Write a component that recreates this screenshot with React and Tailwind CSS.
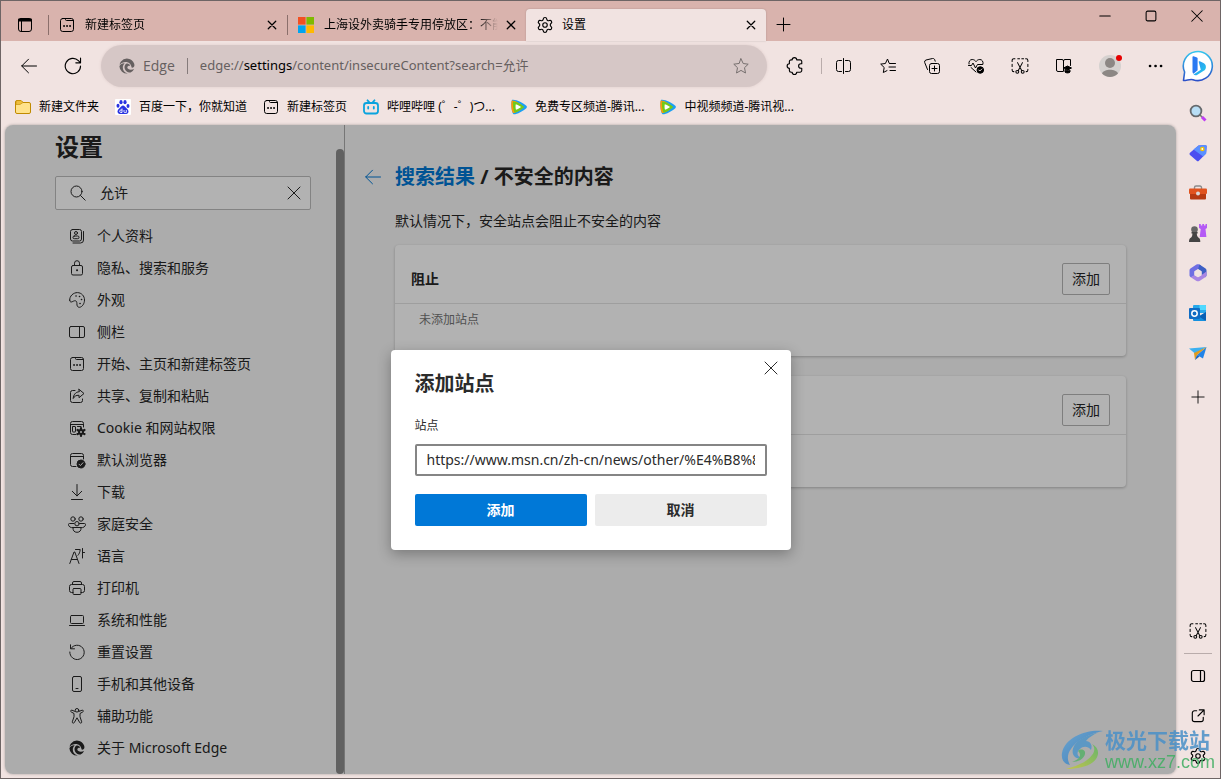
import React, { useState } from 'react'
import { Settings } from 'lucide-react'

const Icon = ({ children, className = 'h-4 w-4', width = 1 }) => (
  <svg
    viewBox="0 0 16 16"
    className={`shrink-0 ${className}`}
    fill="none"
    stroke="currentColor"
    strokeWidth={width}
    strokeLinecap="round"
    strokeLinejoin="round"
    aria-hidden="true"
  >
    {children}
  </svg>
)

const GearIcon = () => <Settings className="h-[18px] w-[18px] shrink-0" strokeWidth={1.5} aria-hidden="true" />

const CloseIcon = ({ className, width }) => (
  <Icon className={className} width={width}>
    <path d="M2 2l12 12M14 2L2 14" />
  </Icon>
)

const BackIcon = () => (
  <Icon>
    <path d="M15.5 8H.8M7.5 1.2L.7 8l6.8 6.8" />
  </Icon>
)

const NewTabIcon = () => (
  <Icon>
    <rect x="1.5" y="1.5" width="13" height="13" rx="2.2" />
    <path d="M6.5 1.5v1a1 1 0 0 0 1 1h7" />
    <path d="M5 9h.1M8 9h.1M11 9h.1" strokeWidth="1.8" />
  </Icon>
)

const EdgeIcon = () => (
  <svg viewBox="0 0 16 16" className="h-4 w-4 shrink-0" fill="currentColor" aria-hidden="true">
    <path d="M2 3.6A7.6 7.6 0 0 1 15.1 5.4C16.2 8.6 14.4 10 12.6 9.6 12.2 6 9.6 3.9 6.6 4 4.4 4.100 2.200 5 .6 6.800.7 5.500 1.200 4.500 2 3.600z" />
    <path d="M.4 8.200C1.500 6.200 3.600 5.200 5.500 5.400 3.500 7.400 3.300 10.600 4.700 12.800 5.600 14.200 7 15.100 8.800 15.500A7.600 7.600 0 0 1 .4 8.200z" />
    <path d="M7.200 5.700C9 5.200 10.800 6.200 11.200 7.900 9.800 7.600 8.300 8.200 8.300 9.600 8.600 11.700 12 12.500 15.100 11A7.400 7.400 0 0 1 11.600 14.600C8.200 14.700 5.600 12.300 5.500 9.300 5.500 7.600 6.200 6.300 7.200 5.700z" />
  </svg>
)

const SnipIcon = () => (
  <Icon className="h-[18px] w-[18px]" width={0.9}>
    <path d="M1 4V3a1.500 1.500 0 0 1 1.500-1.500h1M6 1.500h1.600M9.600 1.500h1.600M13 1.500h.5A1.500 1.500 0 0 1 15 3v1M1 6.500v2M15 6.500v2M1 10.800v.7A1.500 1.500 0 0 0 2.500 13M15 10.800v.7a1.500 1.500 0 0 1-1.500 1.500" />
    <path d="M5.800 5l3.700 7M10.200 5l-3.700 7" />
    <circle cx="5.600" cy="13.200" r="1.300" />
    <circle cx="10.400" cy="13.200" r="1.300" />
  </Icon>
)

const TencentIcon = () => (
  <svg viewBox="0 0 16 16" className="h-4 w-4 shrink-0" aria-hidden="true">
    <path d="M1.200.8C5 .2 12.500 4 15.300 6.800c.8.8.8 1.600 0 2.400C12.500 12 5 15.800 2.600 15.300.6 14.500-.4 3 1.200.8z" fill="#1ba0f2" />
    <path d="M.8 1.600C3.400 1 9.500 4.500 12 8c-2.500 3.500-7 6-10 6C.1 11.500-.2 4 .8 1.600z" fill="#ff9a0b" />
    <path d="M2 2.500c3 .1 8.600 3 11.200 5.500C10.600 10.600 6 13.400 3.400 13.600 2.200 10.600 1.500 5.500 2 2.500z" fill="#72ca1a" />
    <path d="M4.800 5.200C6.600 5.600 9 7 10 8c-1 1-3.200 2.400-5 2.800-.5-1.400-.6-4-.2-5.600z" fill="#fff" />
  </svg>
)

const NAV = [
  {
    label: '个人资料',
    icon: (
      <>
        <rect x="1.5" y="1.5" width="11" height="11.5" rx="2" />
        <path d="M14.500 3.500V12a3 3 0 0 1-3 3H4" />
        <circle cx="7" cy="5" r="1.5" />
        <rect x="4" y="8" width="6" height="2.700" rx="1.300" />
      </>
    ),
  },
  {
    label: '隐私、搜索和服务',
    icon: (
      <>
        <rect x="2.5" y="5.5" width="11" height="9.5" rx="1.5" />
        <path d="M5.500 5.500V3.200a2.500 2.500 0 0 1 5 0v2.300" />
        <path d="M8 10.200h.1" strokeWidth="2" />
      </>
    ),
  },
  {
    label: '外观',
    icon: (
      <>
        <path d="M.7 8.200C.3 4 4.500.5 8.500.6c4 .1 7 3.400 7 7.400 0 3.500-2.200 7-5 7.300-1.500.1-2.300-1-2.500-2.300-.2-1.800.1-3.500-1.200-4.100C5 8.200 3.500 10 2.200 10 1.200 10 .8 9.200.7 8.200z" />
        <path d="M7 4h.1M10.500 4.500h.1M12.500 7.500h.1M11 11.500h.1" strokeWidth="1.6" />
      </>
    ),
  },
  {
    label: '侧栏',
    icon: (
      <>
        <rect x=".5" y="2.5" width="15" height="11" rx="1.5" />
        <path d="M10.500 2.500v11" />
      </>
    ),
  },
  {
    label: '开始、主页和新建标签页',
    icon: (
      <>
        <rect x="1.5" y="1.5" width="13" height="13" rx="2" />
        <path d="M6.500 1.500v1a1 1 0 0 0 1 1h7" />
        <path d="M5 9h.1M8 9h.1M11 9h.1" strokeWidth="1.8" />
      </>
    ),
  },
  {
    label: '共享、复制和粘贴',
    icon: (
      <>
        <path d="M6 2.500H3.500a2 2 0 0 0-2 2v8a2 2 0 0 0 2 2h8a2 2 0 0 0 2-2V11" />
        <path d="M10 1.300l5 4.200-5 4.200V7.300C7 7 5.300 8.500 4.200 10.500 4.500 7 6.300 4 10 3.700z" />
      </>
    ),
  },
  {
    label: 'Cookie 和网站权限',
    icon: (
      <>
        <path d="M7 14.500H3.500a2 2 0 0 1-2-2v-9a2 2 0 0 1 2-2h9a2 2 0 0 1 2 2V7M1.500 4.500h13" />
        <rect x="3.5" y="6.5" width="3" height="5.5" rx=".5" />
        <path d="M8.500 6.500H12" />
        <path
          d="M12 8v8M8.500 10l7 4M8.500 14l7-4"
          strokeWidth="2.200"
        />
        <circle cx="12" cy="12" r="3" fill="currentColor" stroke="none" />
        <circle cx="12" cy="12" r="1" fill="#f7f7f7" stroke="none" />
      </>
    ),
  },
  {
    label: '默认浏览器',
    icon: (
      <>
        <path d="M7 14.500H3.500a2 2 0 0 1-2-2v-9a2 2 0 0 1 2-2h9a2 2 0 0 1 2 2V7M1.500 4.500h13" />
        <circle cx="12" cy="12" r="4" fill="currentColor" />
        <path d="M10 12.200l1.400 1.400 2.600-2.900" stroke="#f7f7f7" />
      </>
    ),
  },
  { label: '下载', icon: <path d="M8 .5v11.300M3.300 7.300L8 12l4.700-4.700M2.500 15.500h11" /> },
  {
    label: '家庭安全',
    icon: (
      <>
        <circle cx="4" cy="3" r="2.200" />
        <circle cx="12" cy="3" r="2.200" />
        <circle cx="8" cy="7.700" r="2.200" />
        <path d="M5 7.500H.5a1 1 0 0 0-1 1c0 2 2 3.500 4.500 3.200M11 7.500h4.500a1 1 0 0 1 1 1c0 2-2 3.500-4.500 3.200" />
        <path d="M4 11.500h8c.3 3-1.200 4.800-4 4.800s-4.300-1.800-4-4.800z" />
      </>
    ),
  },
  {
    label: '语言',
    icon: <path d="M.8 15.500L5 4h.8L10 15.500M2.300 11.500h6.200M6.500 1.500h4.700C11 4 10.200 6 9 7.300M13.500.5v9.500M13.500 4.500h2" />,
  },
  {
    label: '打印机',
    icon: (
      <>
        <path d="M4 12.500H2.500a2 2 0 0 1-2-2v-4a2 2 0 0 1 2-2h11a2 2 0 0 1 2 2v4a2 2 0 0 1-2 2H12" />
        <path d="M3.500 4.500V3a1.500 1.500 0 0 1 1.500-1.500h6A1.500 1.500 0 0 1 12.500 3v1.500" />
        <rect x="4" y="8.500" width="8" height="6" rx="1" />
      </>
    ),
  },
  {
    label: '系统和性能',
    icon: (
      <>
        <rect x="1.5" y="3.5" width="13" height="8" rx="1" />
        <path d="M.5 13.500h15" />
      </>
    ),
  },
  { label: '重置设置', icon: <path d="M1.500.8v4h4M1.900 4.500A7.200 7.200 0 1 1 .8 8" /> },
  {
    label: '手机和其他设备',
    icon: (
      <>
        <rect x="3.5" y=".5" width="9" height="15" rx="1.5" />
        <path d="M7 12.500h2" />
      </>
    ),
  },
  {
    label: '辅助功能',
    icon: (
      <>
        <circle cx="8" cy="2.300" r="1.800" />
        <path d="M6.200 3.500L2.900 2.200c-1.300-.3-1.800 1.300-.6 1.800L5 5.500v3.300l-1.700 5c-.3 1.400 1.500 1.900 2 .7L8 9.800l2.700 4.700c.5 1.200 2.300.7 2-.7l-1.700-5V5.500L13.700 4c1.200-.5.7-2.100-.6-1.800L9.800 3.500" />
      </>
    ),
  },
]

const Tab = ({ icon, title }) => (
  <div className="flex h-8 w-[239px] items-center">
    <span className="h-5 w-px bg-[#8b6f6b]" />
    <span className="ml-2.5">{icon}</span>
    <span className="mr-2 ml-2.5 flex-1 overflow-hidden whitespace-nowrap [mask-image:linear-gradient(to_right,black_88%,transparent)]">
      {title}
    </span>
    <button type="button" aria-label="关闭标签页" className="mr-2.5">
      <CloseIcon className="h-2.5 w-2.5" width={2} />
    </button>
  </div>
)

const TabStrip = () => (
  <header className="flex h-10 items-end bg-[#d9b3ad] text-xs text-black">
    <button type="button" aria-label="标签页菜单" className="flex h-8 w-[47px] items-center justify-center">
      <Icon>
        <rect x="1.5" y="1.5" width="13" height="13" rx="2.5" />
        <path d="M2 3.500h12M2 2.500h12" strokeWidth="2" />
        <path d="M4.500 4v10.500" />
      </Icon>
    </button>
    <Tab icon={<NewTabIcon />} title="新建标签页" />
    <Tab
      icon={
        <svg viewBox="0 0 16 16" className="h-4 w-4 shrink-0" aria-hidden="true">
          <path fill="#f25022" d="M0 0h7.600v7.600H0z" />
          <path fill="#7fba00" d="M8.400 0H16v7.600H8.400z" />
          <path fill="#00a4ef" d="M0 8.400h7.600V16H0z" />
          <path fill="#ffb900" d="M8.400 8.400H16V16H8.400z" />
        </svg>
      }
      title="上海设外卖骑手专用停放区：不能"
    />
    <div className="flex h-8 w-60 items-center rounded-t bg-[#f1e3e1] px-2.5 shadow-[0_0_2px_rgba(0,0,0,0.2)]">
      <GearIcon />
      <span className="ml-2 flex-1">设置</span>
      <button type="button" aria-label="关闭标签页">
        <CloseIcon className="h-2.5 w-2.5" width={2} />
      </button>
    </div>
    <button type="button" aria-label="新建标签页" className="flex h-8 w-9 items-center justify-center">
      <Icon>
        <path d="M7.500 1v13M1 7.500h13" />
      </Icon>
    </button>
    <div className="ml-auto flex h-full items-start">
      <button type="button" aria-label="最小化" className="flex h-[30px] w-[46px] items-center justify-center">
        <Icon className="h-3 w-3" width={1.4}>
          <path d="M1 8h14" />
        </Icon>
      </button>
      <button type="button" aria-label="最大化" className="flex h-[30px] w-[46px] items-center justify-center">
        <Icon className="h-3 w-3" width={1.4}>
          <rect x="1.5" y="1.5" width="13" height="13" rx="2" />
        </Icon>
      </button>
      <button type="button" aria-label="关闭" className="flex h-[30px] w-[46px] items-center justify-center">
        <Icon className="h-3 w-3" width={1.4}>
          <path d="M1 1l14 14M15 1L1 15" />
        </Icon>
      </button>
    </div>
  </header>
)

const ToolButton = ({ label, children, className = 'w-11' }) => (
  <button type="button" aria-label={label} className={`flex h-10 shrink-0 items-center justify-center ${className}`}>
    {children}
  </button>
)

const Toolbar = () => {
  const [url, setUrl] = useState('edge://settings/content/insecureContent?search=允许')
  const [editing, setEditing] = useState(false)
  const [, scheme, host, path] = url.match(/^(\w+:\/\/)?([^/]*)(.*)$/)

  return (
    <div className="flex h-[50px] items-center pl-1.5 text-black">
      <ToolButton label="返回">
        <BackIcon />
      </ToolButton>
      <ToolButton label="刷新">
        <Icon className="h-[18px] w-[18px]">
          <path d="M14.700 8A6.800 6.800 0 1 1 12.800 3.300l1.700 1.700M14.700 1v4.200h-4.200" />
        </Icon>
      </ToolButton>
      <div className="ml-1.5 flex h-[42px] min-w-0 flex-1 items-center rounded-full bg-[#d6c7c6] px-[18px] text-[#666060] shadow-[0_0_3px_rgba(120,80,80,0.15)]">
        <EdgeIcon />
        <span className="ml-2 font-['Open_Sans',sans-serif] text-sm">Edge</span>
        <span className="mx-3 h-4 w-px bg-[#857b7b]" />
        <div className="relative min-w-0 flex-1 text-[13px]">
          <input
            id="address"
            aria-label="地址栏"
            className={`w-full bg-transparent outline-none ${editing ? 'text-black' : 'text-transparent'}`}
            value={url}
            onChange={(e) => setUrl(e.target.value)}
            onFocus={() => setEditing(true)}
            onBlur={() => setEditing(false)}
          />
          {!editing && (
            <label htmlFor="address" className="absolute inset-0 cursor-text truncate">
              {scheme}
              <span className="text-black">{host}</span>
              {path}
            </label>
          )}
        </div>
        <button type="button" aria-label="收藏此页" className="text-[#77706f]">
          <Icon>
            <path d="M8 .8l2.200 4.700 5 .7-3.700 3.500 1 5.300L8 12.400 3.500 15l1-5.300L.8 6.200l5-.7z" />
          </Icon>
        </button>
      </div>
      <ToolButton label="扩展" className="ml-1.5 w-11">
        <Icon className="h-[18px] w-[18px]">
          <path d="M5.500 2.500a2 2 0 0 1 4 0h3A1.500 1.500 0 0 1 14 4v2h-.8a2 2 0 0 0 0 4h.8v2a1.500 1.500 0 0 1-1.500 1.500h-3a2 2 0 0 1-4 0h-1A1.500 1.500 0 0 1 3 12v-2a2 2 0 0 1 0-4V4a1.500 1.500 0 0 1 1.500-1.500z" />
        </Icon>
      </ToolButton>
      <span className="ml-1 h-4 w-px bg-[#b9acab]" />
      <ToolButton label="分屏">
        <Icon>
          <path d="M5.500 2.500h-3a2 2 0 0 0-2 2v7a2 2 0 0 0 2 2h3M9.500 2.500h3a2 2 0 0 1 2 2v7a2 2 0 0 1-2 2h-3M7.500.5v15" />
        </Icon>
      </ToolButton>
      <ToolButton label="收藏夹">
        <Icon>
          <path d="M9 4.800L7.500 1 5.400 5.500l-4.700.6 3.500 3.400-.9 5L7 12.600M9.500 5.500h6M9 9h6.500M10 12.500h5.500" />
        </Icon>
      </ToolButton>
      <ToolButton label="集锦">
        <Icon>
          <rect x="5.5" y="5.5" width="10" height="10" rx="2" />
          <path d="M10.500 8v5M8 10.500h5M3.500 11.500l-2.800-7A2 2 0 0 1 2 2L8.500.5c1-.2 1.800.2 2.200 1.200l.5 1.500" />
        </Icon>
      </ToolButton>
      <ToolButton label="浏览器概要">
        <Icon>
          <path d="M8 14L3 9.500M1 6C.5 3.500 2 1.500 4.200 1.500 6 1.500 7.200 2.500 8 3.600 8.800 2.500 10 1.500 11.800 1.500 14 1.500 15.500 3.500 15 6M.5 7.500h3l1.500-2.500 2.500 5 2-3.500h5" />
          <circle cx="12.300" cy="12" r="3.300" fill="currentColor" />
          <path d="M10.800 12l1 1 2-2" stroke="#f1e3e1" />
        </Icon>
      </ToolButton>
      <ToolButton label="网页捕获">
        <SnipIcon />
      </ToolButton>
      <ToolButton label="沉浸式阅读器">
        <Icon>
          <path d="M7.500 2.500v10.500M7 13.500H2A1.500 1.500 0 0 1 .5 12V1.500H6A1.500 1.500 0 0 1 7.500 3 1.500 1.500 0 0 1 9 1.500h5.500v6" />
          <path d="M7.500 10l4-2 4 2-4 2zM9 12.500v1.500c1 1.200 4 1.200 5 0v-1.500z" fill="currentColor" />
        </Icon>
      </ToolButton>
      <ToolButton label="个人资料" className="w-12">
        <svg viewBox="0 0 24 24" className="h-6 w-6 overflow-visible" aria-hidden="true">
          <circle cx="12" cy="12" r="11" fill="#d5d1cf" />
          <circle cx="12" cy="9" r="5" fill="#8c8784" />
          <path d="M4 19.500c2-5 14-5 16 0a11 11 0 0 1-16 0z" fill="#8c8784" />
          <circle cx="21" cy="4" r="3" fill="#e60000" />
        </svg>
      </ToolButton>
      <ToolButton label="设置及其他" className="w-[42px]">
        <Icon>
          <path d="M3 8h.1M8.500 8h.1M14 8h.1" strokeWidth="2.6" />
        </Icon>
      </ToolButton>
    </div>
  )
}

const BOOKMARKS = [
  {
    title: '新建文件夹',
    icon: (
      <svg viewBox="0 0 16 16" className="h-4 w-4 shrink-0" aria-hidden="true">
        <path d="M.5 3A1.500 1.500 0 0 1 2 1.500h4l2 2h6A1.500 1.500 0 0 1 15.500 5v8a1.500 1.500 0 0 1-1.500 1.500H2A1.500 1.500 0 0 1 .5 13z" fill="#ffe28a" stroke="#c08a00" />
        <path d="M1 5.500h4l3-2-2-2H2L1 3z" fill="#eebd3c" stroke="#c08a00" strokeWidth=".6" />
      </svg>
    ),
  },
  {
    title: '百度一下，你就知道',
    icon: (
      <svg viewBox="0 0 16 16" className="h-4 w-4 shrink-0" fill="#2932e1" aria-hidden="true">
        <rect width="16" height="16" rx="1" fill="#fff" />
        <ellipse cx="6" cy="3.200" rx="1.600" ry="2.100" />
        <ellipse cx="10" cy="3.200" rx="1.600" ry="2.100" />
        <ellipse cx="3" cy="6.700" rx="1.500" ry="2" />
        <ellipse cx="13" cy="6.900" rx="1.500" ry="2" />
        <path d="M8 6.500c1.500 0 2.200 1.500 3.500 2.700 1.700 1.500 2.400 2.800 1.800 4.300-.8 2-3 1.500-5.300 1.500s-4.500.5-5.300-1.500c-.6-1.500.1-2.800 1.800-4.300C5.800 8 6.500 6.500 8 6.500z" />
        <path d="M7 9.500v4H5.800c-1.500 0-1.500-2.500 0-2.500H7M9 11v1.800c0 .7.500.9 2.300.7V11" fill="none" stroke="#fff" strokeWidth=".9" />
      </svg>
    ),
  },
  { title: '新建标签页', icon: <NewTabIcon /> },
  {
    title: '哔哩哔哩 (゜-゜)つ...',
    icon: (
      <svg viewBox="0 0 16 16" className="h-4 w-4 shrink-0" fill="none" stroke="#0aa3de" strokeWidth="1.8" strokeLinecap="round" aria-hidden="true">
        <rect x="1" y="4" width="14" height="10.5" rx="2.5" />
        <path d="M4.500 1.300L6.500 3.500M11.500 1.300l-2 2.200M5.200 8v1.500M10.800 8v1.500" />
      </svg>
    ),
  },
  { title: '免费专区频道-腾讯...', icon: <TencentIcon /> },
  { title: '中视频频道-腾讯视...', icon: <TencentIcon /> },
]

const BookmarkBar = () => (
  <nav className="mb-0.5 flex h-8 items-center gap-4 pl-3.5 text-xs text-black">
    {BOOKMARKS.map((item, index) => (
      <a key={index} href="#" className="flex items-center gap-2 whitespace-nowrap">
        {item.icon}
        {item.title}
      </a>
    ))}
  </nav>
)

const SettingsNav = () => {
  const [query, setQuery] = useState('允许')

  return (
    <aside className="flex w-[340px] shrink-0 border-r border-[#aaa] pt-1.5 pl-[50px]">
      <div className="flex-1 pb-2.5">
        <h1 className="mb-[13px] text-2xl font-bold">设置</h1>
        <div className="flex h-[34px] w-64 items-center rounded-xs border border-[#bcbcbc] bg-white pr-2 pl-3.5">
          <Icon>
            <circle cx="6.5" cy="6.5" r="5.5" />
            <path d="M10.500 10.500l4.700 4.700" />
          </Icon>
          <input
            aria-label="搜索设置"
            className="mr-2 ml-3.5 min-w-0 flex-1 bg-transparent text-sm outline-none"
            value={query}
            onChange={(e) => setQuery(e.target.value)}
          />
          <button type="button" aria-label="清除搜索" onClick={() => setQuery('')}>
            <CloseIcon />
          </button>
        </div>
        <ul className="mt-2.5 text-sm">
          {NAV.map((item) => (
            <li key={item.label}>
              <a href="#" className="flex h-8 items-center gap-3 pl-3.5">
                <Icon className="h-4 w-4 overflow-visible">{item.icon}</Icon>
                {item.label}
              </a>
            </li>
          ))}
          <li>
            <a href="#" className="flex h-8 items-center gap-3 pl-3.5">
              <EdgeIcon />
              关于 Microsoft Edge
            </a>
          </li>
        </ul>
      </div>
      <div className="mt-[18px] w-2 rounded-full bg-[#8c8c8c]" />
    </aside>
  )
}

const SiteCard = ({ title, empty }) => (
  <section className="mb-5 rounded bg-white shadow-[0_1px_3px_rgba(0,0,0,0.25)]">
    <div className="flex h-[59px] items-center justify-between border-b border-[#e2e2e2] px-4 pt-2.5">
      <h3 className="text-sm font-bold">{title}</h3>
      <button type="button" className="h-8 rounded-xs border border-[#b5b5b5] px-[9px] text-sm">
        添加
      </button>
    </div>
    <p className="h-[52px] px-6 pt-2 text-xs text-[#757575]">{empty}</p>
  </section>
)

const AddSiteDialog = ({ onClose }) => {
  const [site, setSite] = useState('https://www.msn.cn/zh-cn/news/other/%E4%B8%8A%E6%B5%B7')

  return (
    <div className="absolute inset-0 flex items-center justify-center bg-black/30">
      <form
        role="dialog"
        aria-labelledby="dialog-title"
        className="relative w-[400px] rounded bg-white px-6 pt-5 pb-6 text-[#2b2b2b] shadow-[0_4px_14px_rgba(0,0,0,0.3)]"
        onSubmit={(e) => e.preventDefault()}
      >
        <button type="button" aria-label="关闭" className="absolute top-2.5 right-3" onClick={onClose}>
          <CloseIcon />
        </button>
        <h2 id="dialog-title" className="text-xl font-bold">
          添加站点
        </h2>
        <label htmlFor="site" className="mt-5 block text-xs">
          站点
        </label>
        <input
          id="site"
          className="mt-2.5 h-8 w-full rounded-xs border-2 border-[#858585] px-2.5 text-sm outline-none"
          value={site}
          onChange={(e) => setSite(e.target.value)}
        />
        <div className="mt-[18px] flex gap-2">
          <button type="submit" className="h-8 flex-1 rounded-xs bg-[#0078d7] text-sm font-bold text-white">
            添加
          </button>
          <button type="button" className="h-8 flex-1 rounded-xs bg-[#ececec] text-sm font-bold" onClick={onClose}>
            取消
          </button>
        </div>
      </form>
    </div>
  )
}

const SIDE_APPS = [
  {
    label: '搜索',
    icon: (
      <>
        <path d="M11 11l2.500 2.500" stroke="#777" strokeWidth="1.6" />
        <path d="M13 13l3.500 3.500" stroke="#c03df5" strokeWidth="3" />
        <circle cx="7" cy="7" r="5.4" fill="#b8def5" stroke="#66696c" strokeWidth="1.8" />
      </>
    ),
  },
  {
    label: '购物',
    icon: (
      <>
        <path d="M9.500 1.500L16 1c1 0 1.700.5 1.700 1.500l-.6 7-7.200 7.200c-.7.7-1.500.7-2.200 0L1 11c-.6-.7-.6-1.500 0-2.200z" fill="#4b4ff0" />
        <path d="M9.500 1.500L16 1c1 0 1.700.5 1.700 1.500l-.6 7-3 3L4.500 5.500z" fill="#5a90ff" />
        <circle cx="13.300" cy="5" r="1.600" fill="#fff" stroke="#f5c400" strokeWidth="1.4" />
      </>
    ),
  },
  {
    label: '工具',
    icon: (
      <>
        <path d="M5.500 5V3.500A1.500 1.500 0 0 1 7 2h4a1.500 1.500 0 0 1 1.500 1.500V5" fill="none" stroke="#8b8b8b" strokeWidth="1.4" />
        <rect y="4.500" width="18" height="5.5" rx="1" fill="#e0531f" />
        <path d="M1 10h16v4.500a1 1 0 0 1-1 1H2a1 1 0 0 1-1-1z" fill="#b63a12" />
        <circle cx="9" cy="9.500" r="2" fill="#d9d9d9" />
      </>
    ),
  },
  {
    label: '游戏',
    icon: (
      <>
        <path d="M10 0h1.800v1.500h1.500V0h1.800v1.500h1.400V0H18v4l-1.500 1 .9 8h-6.700l1-8-1.700-1z" fill="#b45af5" />
        <circle cx="5.500" cy="5.500" r="3.300" fill="#666" />
        <path d="M2.500 8h6.100v1.500H7.800c0 2 .8 3.500 2.200 4.500.8.500 1.300 1.500 1.300 4H0c0-2.500.6-3.500 1.400-4C3 13 3.400 11.500 3.400 9.500h-.9z" fill="#444" />
      </>
    ),
  },
  {
    label: 'Microsoft 365',
    icon: (
      <>
        <path d="M7.500.6C8.500 0 9.500 0 10.500.6L12 1.500 9.500 5.300 5.500 7.500V12L1.800 13.300C.9 12.700.5 12 .5 11V6.500c0-1 .4-1.800 1.300-2.300z" fill="#6f6ee3" />
        <path d="M10.500.6l5.700 3.600c.9.500 1.300 1.300 1.300 2.300V11c0 1-.4 1.700-1.300 2.300L12.500 11V7.500L9 5.300z" fill="#3d5fc4" />
        <path d="M16.200 13.300l-5.700 3.600c-1 .6-2 .6-3 0l-5.700-3.600L5.500 11 9 13.200l3.500-2.200 5-3.500V11c0 1-.4 1.700-1.300 2.300z" fill="#a986e3" />
        <path d="M9 5.100l3.600 2.100v4L9 13.300l-3.600-2.100v-4z" fill="#f1e3e1" />
      </>
    ),
  },
  {
    label: 'Outlook',
    icon: (
      <>
        <path d="M4 2a1 1 0 0 1 1-1h11a1 1 0 0 1 1 1v7H4z" fill="#28a8ea" />
        <path d="M10.500 1H16a1 1 0 0 1 1 1v4h-6.500z" fill="#50d9ff" />
        <path d="M4 8l6.500 4L17 8v8a1 1 0 0 1-1 1H5a1 1 0 0 1-1-1z" fill="#1490df" />
        <path d="M17 8l-7 4.500 6.500 4.200A1 1 0 0 0 17 16z" fill="#0a5fb4" />
        <rect x="0" y="4" width="11" height="11" rx="1" fill="#0f6cc4" />
        <circle cx="5.500" cy="9.500" r="2.700" fill="none" stroke="#fff" strokeWidth="1.5" />
      </>
    ),
  },
  {
    label: 'Drop',
    icon: (
      <>
        <path d="M0 4.500L17.500 3 6 9.500z" fill="#3cb0f0" />
        <path d="M17.500 3L14 14.500 8 11z" fill="#2083e8" />
        <path d="M5 9L17.500 3 8 11l-2 5z" fill="#e09a1c" />
        <path d="M6 16l2-5 2.500 1.500z" fill="#1663c4" />
      </>
    ),
  },
]

const SideButton = ({ label, children }) => (
  <button type="button" aria-label={label} className="flex h-10 w-full items-center justify-center">
    {children}
  </button>
)

const EdgeSidebar = () => (
  <aside className="flex w-11 shrink-0 flex-col pb-0.5 text-black">
    <button type="button" aria-label="必应" className="mb-0.5 flex h-[50px] items-center justify-center">
      <svg viewBox="0 0 32 32" className="h-8 w-8" aria-hidden="true">
        <defs>
          <linearGradient id="bubble" x1="0" y1="0" x2="0" y2="1">
            <stop offset="0" stopColor="#35c6ee" />
            <stop offset="1" stopColor="#2b50c8" />
          </linearGradient>
          <linearGradient id="letter" x1="0" y1="0" x2="1" y2="1">
            <stop offset="0" stopColor="#2f8df5" />
            <stop offset="1" stopColor="#22cdea" />
          </linearGradient>
        </defs>
        <path
          d="M1.500 30.500L2.600 22A14.500 14.500 0 1 1 11 29.700C8 28.800 5 30.500 1.500 30.500z"
          fill="#fff"
          stroke="url(#bubble)"
          strokeWidth="1.6"
          strokeLinejoin="round"
        />
        <path d="M11.500 6.300l3.500 1.300c.4.200.6.500.6.900v11.800l-4.100 3.400c-.7-.5-1-1.100-1-2V7c0-.6.400-.9 1-.7z" fill="#2979f2" />
        <path d="M16.800 12.300c-.3-.8.2-1.300 1-1l3.200 1.400c1.900.9 2.900 2.200 2.900 4.200 0 1.700-.8 3-2.200 3.900l-6.300 3.900c-1.400.8-2.800.7-3.900-.3l7.300-4.600z" fill="url(#letter)" />
      </svg>
    </button>
    {SIDE_APPS.map((app) => (
      <SideButton key={app.label} label={app.label}>
        <svg viewBox="0 0 18 18" className="h-[18px] w-[18px]" aria-hidden="true">
          {app.icon}
        </svg>
      </SideButton>
    ))}
    <div className="mt-1">
      <SideButton label="自定义">
        <Icon className="h-3.5 w-3.5">
          <path d="M8 1v14M1 8h14" />
        </Icon>
      </SideButton>
    </div>
    <div className="mt-auto">
      <SideButton label="屏幕截图">
        <SnipIcon />
      </SideButton>
      <hr className="mx-2 my-0.5 border-[#b9acab]" />
      <SideButton label="侧栏">
        <Icon width={1.2}>
          <rect x="1.5" y="2.5" width="13" height="11" rx="2" />
          <path d="M10.500 2.500v11" />
        </Icon>
      </SideButton>
      <SideButton label="在新窗口中打开">
        <Icon className="h-3.5 w-3.5" width={1.3}>
          <path d="M6.500 2H4a2.500 2.500 0 0 0-2.500 2.500V12A2.500 2.500 0 0 0 4 14.500h7.500A2.500 2.500 0 0 0 14 12V9.500M9.500 1h5.500v5.500M15 1L8 8" />
        </Icon>
      </SideButton>
      <SideButton label="设置">
        <GearIcon />
      </SideButton>
    </div>
  </aside>
)

const Watermark = () => (
  <div className="pointer-events-none absolute right-2.5 bottom-1.5 flex items-center opacity-85">
    <svg viewBox="0 0 44 42" className="h-[42px] w-11" aria-hidden="true">
      <defs>
        <linearGradient id="swirl" x1="0" y1="0" x2="1" y2="1">
          <stop offset="0" stopColor="#5fa3d6" />
          <stop offset="1" stopColor="#2f78bd" />
        </linearGradient>
        <linearGradient id="swirl-tail" x1="1" y1="0" x2="0" y2="1">
          <stop offset="0" stopColor="#5cb860" />
          <stop offset="1" stopColor="#c9c83c" />
        </linearGradient>
      </defs>
      <path d="M42 2C26 0 4 8 1 24c-1 7 2 11 8 12-3-5-3-11 1-16C15 12 27 5 42 2z" fill="url(#swirl)" />
      <path d="M38 3C27 6 17 10 13 17c-4 8 1 14 8 12-5-1-6-6-2-9 3-3 8-3 11 1 2-5-1-9-5-9 3-4 7-6 13-9z" fill="#4f95c9" />
      <path d="M31 15c6 3 8 9 4 15-5 7-17 10-30 10 11-3 21-7 26-14 3-4 3-8 0-11z" fill="url(#swirl-tail)" />
      <path d="M17 22c3-3 8-1 7 3-1 5-7 8-13 8 5-2 8-4 8-7 0-2-1-3-2-4z" fill="#58b06a" />
    </svg>
    <div className="w-[105px]">
      <div className="text-[21px] leading-6 font-bold whitespace-nowrap text-[#4a90c8]">极光下载站</div>
      <div className="font-['Liberation_Sans',sans-serif] text-lg leading-5 whitespace-nowrap text-[#3fae62]">www.xz7.com</div>
    </div>
  </div>
)

const App = () => {
  const [open, setOpen] = useState(true)

  return (
    <div className="relative flex min-h-screen flex-col border border-[#6e6565] bg-[#f1e3e1] font-['Noto_Sans','Noto_Sans_CJK_SC',sans-serif]">
      <TabStrip />
      <div className="flex flex-1">
        <div className="flex min-w-0 flex-1 flex-col">
          <Toolbar />
          <BookmarkBar />
          <div className="relative mb-1 ml-1 flex flex-1 overflow-hidden rounded-lg bg-[#f7f7f7] text-[#262626] shadow-[0_0_3px_rgba(0,0,0,0.3)]">
            <SettingsNav />
            <main className="flex-1 pt-9 pr-[50px] pl-5">
              <div className="flex h-8 items-center">
                <button type="button" aria-label="返回" className="w-[30px] text-[#0078d4]">
                  <BackIcon />
                </button>
                <h2 className="text-xl font-bold">
                  <a href="#" className="text-[#0078d4]">
                    搜索结果
                  </a>{' '}
                  / 不安全的内容
                </h2>
              </div>
              <div className="ml-[30px]">
                <p className="mt-4 mb-3 text-sm leading-6">默认情况下，安全站点会阻止不安全的内容</p>
                <SiteCard title="阻止" empty="未添加站点" />
                <SiteCard title="允许" empty="未添加站点" />
              </div>
            </main>
            {open && <AddSiteDialog onClose={() => setOpen(false)} />}
          </div>
        </div>
        <EdgeSidebar />
      </div>
      <Watermark />
    </div>
  )
}

export default App
